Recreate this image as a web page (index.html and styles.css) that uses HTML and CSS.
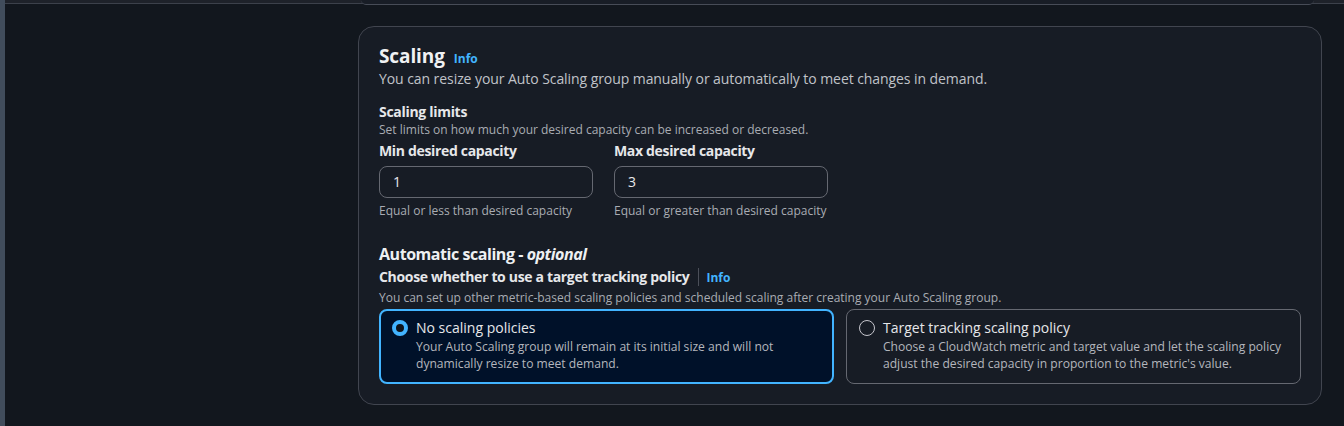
FILE: index.html
```html
<!DOCTYPE html>
<html>
<head>
<meta charset="utf-8">
<link rel="stylesheet" href="styles.css">
</head>
<body>
<div class="page">
  <div class="sidebar"></div>
  <div class="main">
    <div class="topbar"><div class="prev"></div></div>
    <section class="container">
      <div class="head">
        <h2 class="title">Scaling</h2>
        <a class="info">Info</a>
      </div>
      <p class="desc">You can resize your Auto Scaling group manually or automatically to meet changes in demand.</p>

      <h3 class="sub">Scaling limits</h3>
      <p class="small">Set limits on how much your desired capacity can be increased or decreased.</p>

      <div class="fields">
        <div class="field">
          <label class="label">Min desired capacity</label>
          <div class="input">1</div>
          <p class="small hint">Equal or less than desired capacity</p>
        </div>
        <div class="field">
          <label class="label">Max desired capacity</label>
          <div class="input">3</div>
          <p class="small hint">Equal or greater than desired capacity</p>
        </div>
      </div>

      <h3 class="auto">Automatic scaling - <i>optional</i></h3>
      <div class="choose">
        <span class="label">Choose whether to use a target tracking policy</span>
        <span class="divider"></span>
        <a class="info info2">Info</a>
      </div>
      <p class="small">You can set up other metric-based scaling policies and scheduled scaling after creating your Auto Scaling group.</p>

      <div class="tiles">
        <div class="tile selected">
          <span class="radio on"></span>
          <div class="tile-text">
            <div class="tile-title">No scaling policies</div>
            <div class="tile-desc">Your Auto Scaling group will remain at its initial size and will not dynamically resize to meet demand.</div>
          </div>
        </div>
        <div class="tile">
          <span class="radio"></span>
          <div class="tile-text">
            <div class="tile-title">Target tracking scaling policy</div>
            <div class="tile-desc">Choose a CloudWatch metric and target value and let the scaling policy adjust the desired capacity in proportion to the metric's value.</div>
          </div>
        </div>
      </div>
    </section>
  </div>
</div>
</body>
</html>
```

FILE: styles.css
```css
* { box-sizing: border-box; }
html, body { margin: 0; padding: 0; }
body {
  background: #12171e;
  font-family: "Open Sans", "Noto Sans", sans-serif;
  color: #dedee3;
}
.page { display: flex; height: 426px; overflow: hidden; }
.sidebar { width: 5px; background: #414d5c; flex: none; }
.main { flex: 1; display: flex; flex-direction: column; }
.topbar {
  height: 4px;
  background: #1e222a;
  border-bottom: 1px solid #3c414b;
  position: relative;
}
.prev {
  position: absolute;
  left: 356px;
  right: 30px;
  top: 0;
  height: 5px;
  background: #181d26;
  border-bottom: 1px solid #474c57;
  border-radius: 0 0 14px 14px;
}
.container {
  margin: 22px 22px 0 353px;
  background: #171c25;
  border: 1px solid #41454f;
  border-radius: 16px;
  padding: 17px 20px 20px 20px;
}
.head { display: flex; align-items: baseline; gap: 9px; }
.title {
  margin: 0;
  font-size: 19px;
  line-height: 24px;
  font-weight: 700;
  color: #f0f1f3;
  letter-spacing: -0.1px;
}
.info {
  color: #42b4ff;
  font-size: 12px;
  font-weight: 700;
}
.desc {
  margin: 1px 0 0;
  font-size: 14px;
  line-height: 20px;
  color: #c0c3c9;
  letter-spacing: -0.07px;
}
.sub {
  margin: 13px 0 0;
  font-size: 14px;
  line-height: 20px;
  font-weight: 700;
  color: #e6e7ea;
  letter-spacing: -0.3px;
}
.small {
  margin: 0;
  font-size: 12px;
  line-height: 16px;
  color: #a9acb3;
  letter-spacing: 0;
}
.fields { display: flex; gap: 21px; margin-top: 3px; }
.field { width: 214px; display: flex; flex-direction: column; }
.label {
  font-size: 14px;
  line-height: 20px;
  font-weight: 700;
  color: #e6e7ea;
  letter-spacing: -0.33px;
}
.input {
  margin-top: 5px;
  height: 32px;
  border: 1px solid #656871;
  border-radius: 8px;
  padding: 0 13px;
  font-size: 14px;
  line-height: 30px;
  color: #e6e7ea;
}
.hint { margin-top: 5px; }
.auto {
  margin: 25px 0 0;
  font-size: 16px;
  line-height: 20px;
  font-weight: 700;
  color: #eef0f2;
  letter-spacing: -0.45px;
}
.auto i { font-weight: 700; }
.choose { display: flex; align-items: center; margin: 3px 0 3px; height: 20px; }
.divider {
  width: 1px;
  height: 18px;
  background: #4b4f59;
  margin: 0 8px 0 8px;
}
.info2 { font-size: 12px; }
.tiles { display: flex; gap: 12px; margin-top: 3px; }
.tile {
  flex: 1;
  display: flex;
  gap: 8px;
  border: 1px solid #656871;
  border-radius: 8px;
  padding: 8px 12px 10px 12px;
  min-height: 75px;
}
.tile.selected {
  background: #001129;
  border: 2px solid #42b4ff;
  padding: 7px 11px 9px 11px;
}
.radio {
  flex: none;
  width: 16px;
  height: 16px;
  border-radius: 50%;
  border: 1px solid #c6c6cd;
  margin-top: 2px;
}
.radio.on {
  border: 4px solid #42b4ff;
  background: #0f141a;
}
.tile-title {
  font-size: 14px;
  line-height: 20px;
  color: #e6e7ea;
  letter-spacing: 0;
}
.tile-desc {
  font-size: 12.1px;
  line-height: 17px;
  color: #b4b6bd;
  letter-spacing: 0;
  max-width: 405px;
}
.tile:not(.selected) .tile-desc { max-width: 412px; }
```
